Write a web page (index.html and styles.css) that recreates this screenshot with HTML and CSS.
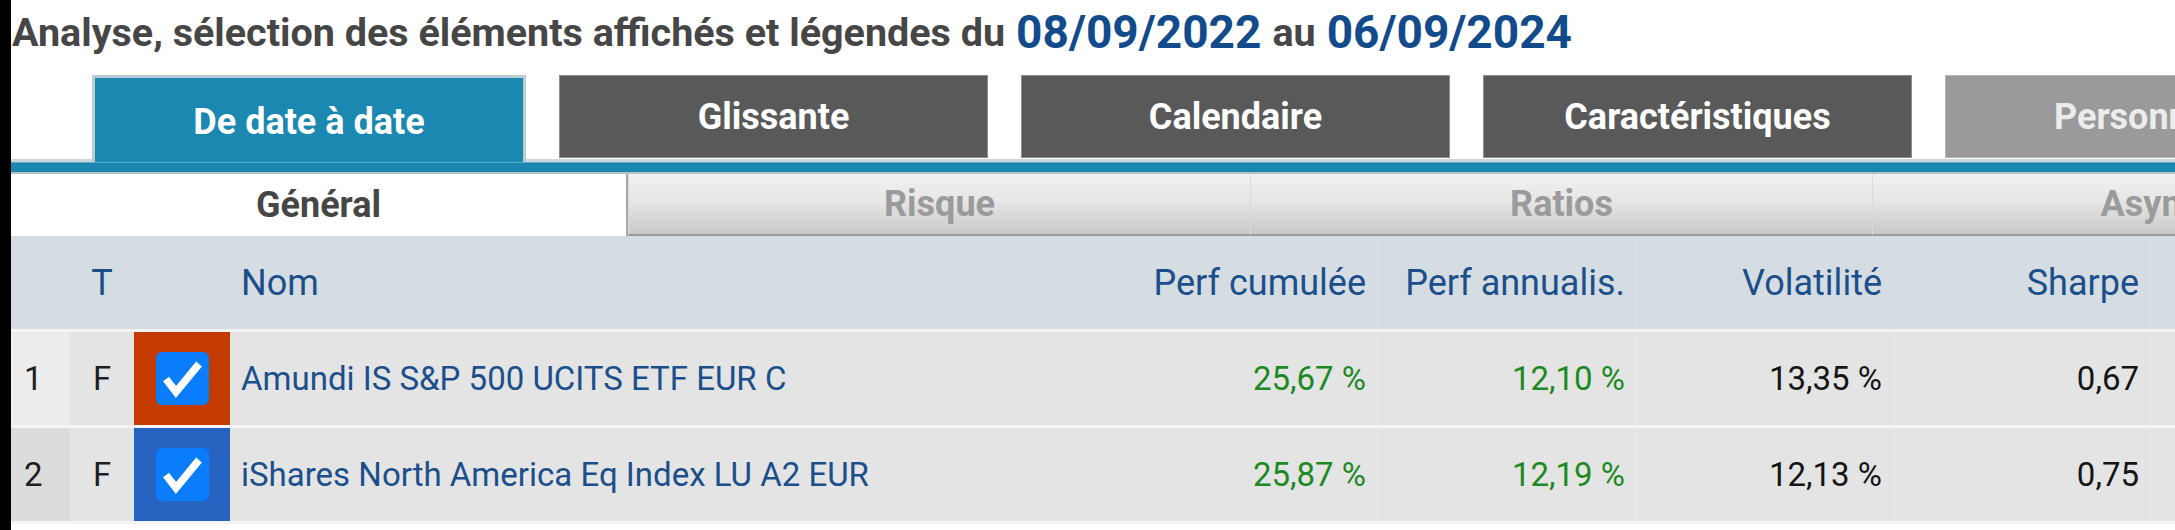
FILE: index.html
```html
<!DOCTYPE html>
<html lang="fr">
<head>
<meta charset="utf-8">
<title>Analyse</title>
<link rel="stylesheet" href="styles.css">
</head>
<body>
<div class="page">
  <h1 class="title">
    <span class="title-text">Analyse, sélection des éléments affichés et légendes du</span>
    <span class="date">08/09/2022</span>
    <span class="title-text">au</span>
    <span class="date">06/09/2024</span>
  </h1>

  <div class="tabs">
    <div class="tab tab-active">De date à date</div>
    <div class="tab">Glissante</div>
    <div class="tab">Calendaire</div>
    <div class="tab">Caractéristiques</div>
    <div class="tab tab-disabled">Personnalisé</div>
  </div>
  <div class="bar"></div>

  <div class="subtabs">
    <div class="subtab subtab-active">Général</div>
    <div class="subtab">Risque</div>
    <div class="subtab">Ratios</div>
    <div class="subtab">Asymétrie</div>
  </div>

  <div class="table">
    <div class="row head">
      <div class="cell c-num"></div>
      <div class="cell c-type">T</div>
      <div class="cell c-color"></div>
      <div class="cell c-name">Nom</div>
      <div class="cell c-val c-first">Perf cumulée</div>
      <div class="cell c-val">Perf annualis.</div>
      <div class="cell c-val">Volatilité</div>
      <div class="cell c-val">Sharpe</div>
      <div class="cell c-val"></div>
    </div>
    <div class="row data">
      <div class="cell c-num num-light">1</div>
      <div class="cell c-type">F</div>
      <div class="cell c-color swatch-red">
        <svg class="check" viewBox="0 0 53 53" width="53" height="53"><rect x="0" y="0" width="53" height="53" rx="6" fill="#0a7cfe"/><polyline points="10,27 20,40 43,12" fill="none" stroke="#ffffff" stroke-width="7.5"/></svg>
      </div>
      <div class="cell c-name">Amundi IS S&amp;P 500 UCITS ETF EUR C</div>
      <div class="cell c-val c-first pos">25,67 %</div>
      <div class="cell c-val pos">12,10 %</div>
      <div class="cell c-val">13,35 %</div>
      <div class="cell c-val">0,67</div>
      <div class="cell c-val"></div>
    </div>
    <div class="row data">
      <div class="cell c-num num-dark">2</div>
      <div class="cell c-type">F</div>
      <div class="cell c-color swatch-blue">
        <svg class="check" viewBox="0 0 53 53" width="53" height="53"><rect x="0" y="0" width="53" height="53" rx="6" fill="#0a7cfe"/><polyline points="10,27 20,40 43,12" fill="none" stroke="#ffffff" stroke-width="7.5"/></svg>
      </div>
      <div class="cell c-name">iShares North America Eq Index LU A2 EUR</div>
      <div class="cell c-val c-first pos">25,87 %</div>
      <div class="cell c-val pos">12,19 %</div>
      <div class="cell c-val">12,13 %</div>
      <div class="cell c-val">0,75</div>
      <div class="cell c-val"></div>
    </div>
  </div>
</div>
</body>
</html>
```

FILE: styles.css
```css
* { box-sizing: border-box; }

html, body {
  margin: 0;
  padding: 0;
  background: #ffffff;
}

body {
  border-left: 11px solid #000000;
  height: 530px;
  overflow: hidden;
  font-family: Roboto, "Liberation Sans", Arial, sans-serif;
}

.page {
  width: 2300px;
}

.title {
  margin: 0;
  height: 62px;
  display: flex;
  align-items: center;
  gap: 11px;
  padding-left: 1px;
  padding-top: 2px;
  font-weight: 700;
  white-space: nowrap;
}

.title-text {
  font-size: 39.5px;
  color: #464646;
}

.date {
  font-size: 46px;
  color: #114b8c;
}

.tabs {
  margin-top: 13px;
  padding-left: 81px;
  display: flex;
  align-items: flex-start;
  gap: 33px;
  height: 87px;
  border-bottom: 3px solid #cdd6da;
}

.tab {
  flex: 0 0 429px;
  height: 83px;
  display: flex;
  align-items: center;
  justify-content: center;
  background: #595959;
  border: 1px solid #8e8e8e;
  color: #ffffff;
  font-size: 36px;
  font-weight: 700;
  white-space: nowrap;
  overflow: hidden;
}

.tab-active {
  flex-basis: 434px;
  height: 87px;
  margin-bottom: -3px;
  background: #1b88b2;
  border: 3px solid #b9cdd5;
  border-bottom: none;
  padding-top: 4px;
}

.tab-disabled {
  background: #9a9a9a;
  border-color: #b5b5b5;
  color: #ececec;
  justify-content: flex-start;
  padding-left: 108px;
}

.bar {
  height: 12px;
  background: #1b87b0;
  border-top: 1px solid #57a9cb;
  border-bottom: 2px solid #b3c1c8;
}

.subtabs {
  display: flex;
  height: 62px;
}

.subtab {
  flex: 0 0 622px;
  display: flex;
  align-items: center;
  justify-content: center;
  background: linear-gradient(#f1f1f1 0%, #e6e6e6 45%, #c9c9c9 100%);
  border-left: 1px solid #dadada;
  border-bottom: 2px solid #9a9a9a;
  color: #9b9b9b;
  font-size: 36px;
  font-weight: 700;
}

.subtab-active {
  flex-basis: 617px;
  background: #ffffff;
  border-left: none;
  border-bottom: none;
  border-right: 2px solid #a8a8a8;
  color: #464646;
}

.table {
  font-size: 36px;
}

.row {
  display: grid;
  grid-template-columns: 59px 64px 96px 890px 257px 259px 257px 257px 200px;
  height: 96px;
  background: #e4e4e4;
  border-bottom: 3px solid #f4f4f4;
}

.row.data {
  font-size: 33px;
}

.row.head {
  background: #d5dde2;
  color: #1b4f8c;
}

.cell {
  display: flex;
  align-items: center;
  white-space: nowrap;
  overflow: hidden;
}

.c-num {
  padding-left: 13px;
  color: #1e1e1e;
}

.num-light { background: #ececec; }
.num-dark { background: #dcdcdc; }

.c-type {
  justify-content: center;
  color: #1e1e1e;
}

.head .c-type { color: #1b4f8c; }

.c-color {
  justify-content: center;
  align-items: center;
}

.swatch-red { background: #c43b00; }
.swatch-blue { background: #2662c0; }

.check { display: block; }

.c-name {
  padding-left: 11px;
  color: #1b4f8c;
}

.c-val {
  justify-content: flex-end;
  padding-right: 11px;
  border-left: 1px solid #ececec;
  color: #141414;
}

.head .c-val {
  border-left-color: #dde4e8;
  color: #1b4f8c;
}

.c-first { border-left: none; }

.pos { color: #1b8a1f; }
```
